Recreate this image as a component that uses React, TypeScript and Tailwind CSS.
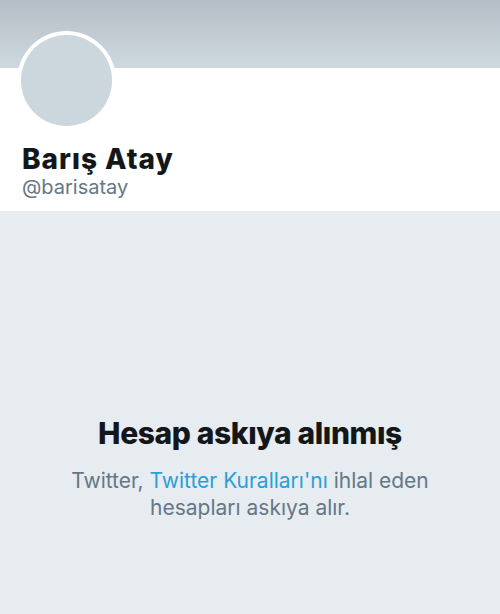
export default function App() {
  return (
    <div className="w-[500px] h-[614px] flex flex-col bg-[#e6ecf0] overflow-hidden" style={{ fontFamily: "Inter, 'Liberation Sans', sans-serif" }}>
      <div className="h-[68px] shrink-0 bg-gradient-to-b from-[#b5bec6] to-[#ced8df]" />
      <div className="relative bg-white h-[143px] shrink-0 px-[22px] flex flex-col">
        <div className="absolute left-[17px] top-[-37px] w-[99px] h-[99px] rounded-full bg-white p-[4px]">
          <div className="w-full h-full rounded-full bg-[#ccd6dd]" />
        </div>
        <div className="mt-[75px] text-[28px] leading-[32px] font-extrabold text-[#14171a] tracking-[1px]">Barış Atay</div>
        <div className="text-[20px] leading-[24px] text-[#657786]">@barisatay</div>
      </div>
      <div className="flex flex-col items-center pt-[204px]">
        <div className="text-[30px] leading-[36px] font-extrabold text-[#14171a] tracking-[-0.4px]">Hesap askıya alınmış</div>
        <div className="mt-[16px] text-[21px] leading-[27px] text-[#657786] text-center w-[410px]">
          Twitter, <span className="text-[#2a9fd8]">Twitter Kuralları'nı</span> ihlal eden hesapları askıya alır.
        </div>
      </div>
    </div>
  );
}
